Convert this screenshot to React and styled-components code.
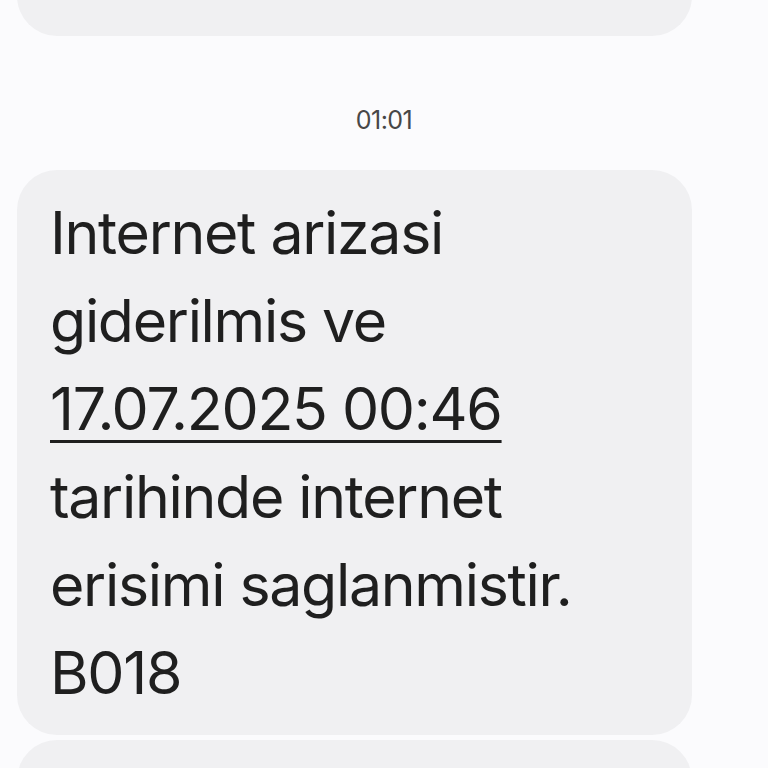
import React from 'react';
import styled, { createGlobalStyle } from 'styled-components';

const GlobalStyle = createGlobalStyle`
  html, body {
    margin: 0;
    padding: 0;
    background: #fbfbfd;
    overflow: hidden;
  }
  body {
    font-family: Inter, "Noto Sans", Roboto, sans-serif;
  }
`;

const Thread = styled.div`
  display: flex;
  flex-direction: column;
  align-items: flex-start;
  gap: 5px;
  padding: 0 76px 0 17px;
  margin-top: -84px;
`;

const Bubble = styled.div`
  box-sizing: border-box;
  width: 675px;
  min-height: ${(p) => p.$minHeight || 0}px;
  background: #f0f0f2;
  border-radius: 40px;
  padding: 19px 33px 18px;
  color: #1f1f1f;
  font-size: 59px;
  line-height: 88px;
  letter-spacing: -1.3px;
`;

const Stamp = styled.div`
  align-self: stretch;
  text-align: center;
  margin-right: -59px;
  padding: 64px 0 30px;
  font-size: 25px;
  line-height: 30px;
  letter-spacing: -0.5px;
  color: #474747;
`;

const DateLink = styled.span`
  text-decoration: underline;
  text-decoration-thickness: 3px;
  text-underline-offset: 10px;
`;

export default function App() {
  return (
    <>
      <GlobalStyle />
      <Thread>
        <Bubble $minHeight={120} />
        <Stamp>01:01</Stamp>
        <Bubble>
          Internet arizasi giderilmis ve <DateLink>17.07.2025 00:46</DateLink> tarihinde internet erisimi saglanmistir. B018
        </Bubble>
        <Bubble $minHeight={120} />
      </Thread>
    </>
  );
}
